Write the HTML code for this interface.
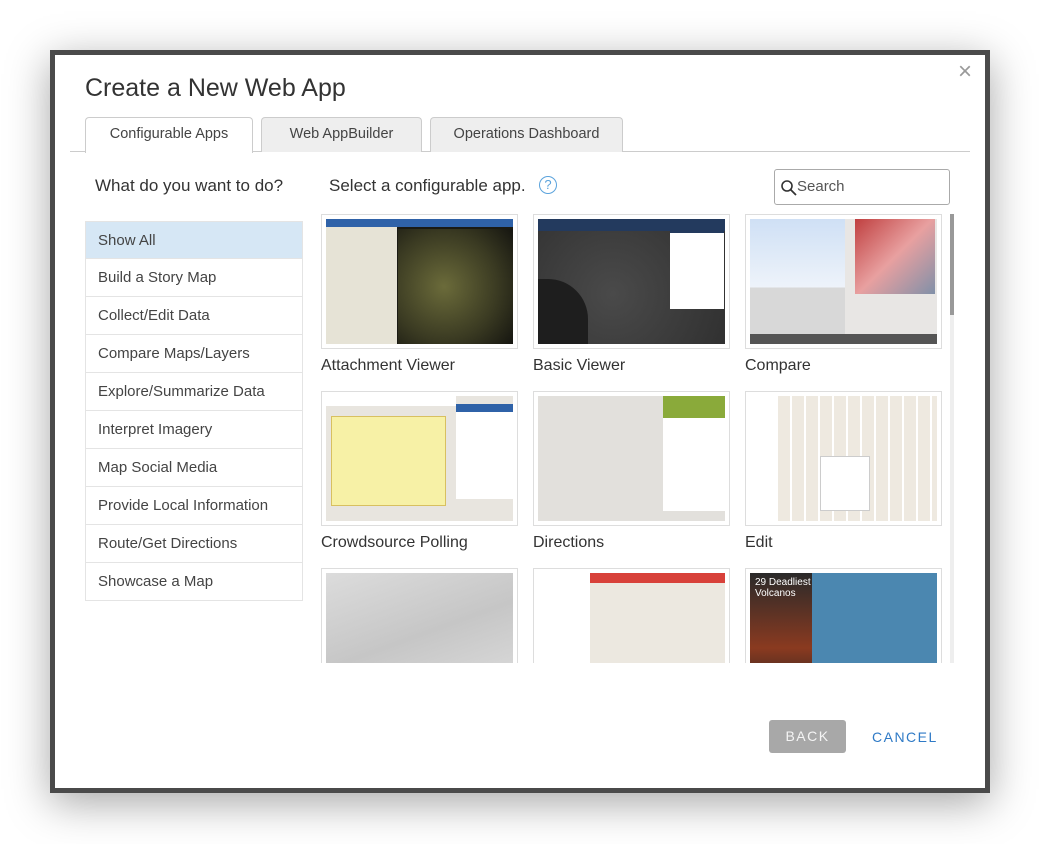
<!DOCTYPE html>
<html><head><meta charset="utf-8"><style>
*{box-sizing:border-box;margin:0;padding:0}
body{width:1040px;height:844px;background:#fff;position:relative;overflow:hidden;font-family:"Liberation Sans",sans-serif;color:#333}
.frame{position:absolute;left:50px;top:50px;width:940px;height:743px;background:#4a4a4a;box-shadow:0 10px 40px rgba(0,0,0,.35)}
.dlg{position:absolute;left:55px;top:55px;width:930px;height:733px;background:#fff}
.abs{position:absolute}
h1{position:absolute;left:30px;top:19px;font-size:25px;font-weight:normal;color:#333}
.close{position:absolute;left:903px;top:3px;font-size:24px;color:#999}
.tab{position:absolute;top:62px;height:35px;border:1px solid #ccc;border-bottom:none;background:#eee;border-radius:4px 4px 0 0;font-size:14.5px;text-align:center;line-height:33px;color:#444}
.tabline{position:absolute;left:15px;top:96px;width:900px;border-top:1px solid #ccc}
.list{position:absolute;left:30px;top:166px;width:218px}
.list div{height:38px;border:1px solid #e4e4e4;border-top:none;padding-left:12px;line-height:37px;font-size:15px;color:#444}
.list div:first-child{background:#d6e7f5;border-top:1px solid #e4e4e4}
.card{position:absolute;width:197px;border:1px solid #ddd;padding:4px;background:#fff}
.card .img{width:100%;height:100%}
.lbl{position:absolute;font-size:16px;color:#333}
</style></head><body>
<div class="frame"></div>
<div class="dlg">
<h1>Create a New Web App</h1>
<div class="close">×</div>
<div class="tabline"></div>
<div class="tab" style="left:30px;width:168px;background:#fff;height:36px">Configurable Apps</div>
<div class="tab" style="left:206px;width:161px">Web AppBuilder</div>
<div class="tab" style="left:375px;width:193px">Operations Dashboard</div>
<div class="abs" style="left:40px;top:121px;font-size:17px;color:#333">What do you want to do?</div>
<div class="abs" style="left:274px;top:121px;font-size:17px;color:#333">Select a configurable app.</div>
<div class="abs" style="left:484px;top:121px;width:18px;height:18px;border:1.5px solid #5ba3dc;border-radius:50%;color:#5ba3dc;font-size:13px;text-align:center;line-height:15px">?</div>
<div class="abs" style="left:719px;top:114px;width:176px;height:36px;border:1px solid #aaa;border-radius:3px">
<svg class="abs" style="left:5px;top:9px" width="18" height="18" viewBox="0 0 18 18"><circle cx="7" cy="7" r="5" fill="none" stroke="#333" stroke-width="1.6"/><path d="M10.5 10.5L16 16" stroke="#333" stroke-width="1.8"/></svg>
<span class="abs" style="left:22px;top:8px;font-size:15px;color:#555">Search</span></div>
<div class="list"><div>Show All</div><div>Build a Story Map</div><div>Collect/Edit Data</div><div>Compare Maps/Layers</div><div>Explore/Summarize Data</div><div>Interpret Imagery</div><div>Map Social Media</div><div>Provide Local Information</div><div>Route/Get Directions</div><div>Showcase a Map</div></div>

<div class="card" style="left:266px;top:159px;height:135px"><div class="img" style="background:linear-gradient(90deg,#e6e3d6 0 38%,#1a1a14 38%);position:relative"><div class="abs" style="left:0;top:0;width:100%;height:8px;background:#2f62a8"></div><div class="abs" style="left:72px;top:10px;right:0;bottom:0;background:radial-gradient(circle at 40% 50%,#6b6b3a,#3a3a22 60%,#151510)"></div></div></div>
<div class="card" style="left:478px;top:159px;height:135px"><div class="img" style="background:radial-gradient(circle at 40% 60%,#4a4a4a,#2e2e2e);position:relative"><div class="abs" style="left:0;top:0;width:100%;height:12px;background:#233a5e"></div><div class="abs" style="left:0;top:60px;width:50px;height:65px;background:#1e1e1e;border-radius:0 40px 0 0"></div><div class="abs" style="left:132px;top:0;width:54px;height:90px;background:#fff;border-top:14px solid #233a5e"></div></div></div>
<div class="card" style="left:690px;top:159px;height:135px"><div class="img" style="background:linear-gradient(180deg,#cfe0f5 0,#eef3fa 55%,#d8d8d8 55%);position:relative"><div class="abs" style="left:95px;top:0;right:0;bottom:10px;background:#e8e6e4"></div><div class="abs" style="left:105px;top:0;width:80px;height:75px;background:linear-gradient(135deg,#c04040,#e8a0a0 50%,#8090a8)"></div><div class="abs" style="left:0;bottom:0;width:100%;height:10px;background:#555"></div></div></div>
<div class="lbl" style="left:266px;top:302px">Attachment Viewer</div>
<div class="lbl" style="left:478px;top:302px">Basic Viewer</div>
<div class="lbl" style="left:690px;top:302px">Compare</div>

<div class="card" style="left:266px;top:336px;height:135px"><div class="img" style="background:#e8e5df;position:relative"><div class="abs" style="left:5px;top:20px;width:115px;height:90px;background:#f7f1a6;border:1px solid #d8c060"></div><div class="abs" style="left:130px;top:8px;right:0;height:95px;background:#fff;border-top:8px solid #2f62a8"></div><div class="abs" style="left:0;top:0;width:130px;height:10px;background:#fff"></div></div></div>
<div class="card" style="left:478px;top:336px;height:135px"><div class="img" style="background:#e2e0dc;position:relative"><div class="abs" style="left:125px;top:0;right:0;bottom:10px;background:#fff;border-top:22px solid #8aaa3a"></div></div></div>
<div class="card" style="left:690px;top:336px;height:135px"><div class="img" style="background:repeating-linear-gradient(90deg,#eee9e0 0 12px,#fff 12px 14px);position:relative"><div class="abs" style="left:0;top:0;width:26px;height:100%;background:#fff"></div><div class="abs" style="left:70px;top:60px;width:50px;height:55px;background:#fff;border:1px solid #ccc"></div></div></div>
<div class="lbl" style="left:266px;top:479px">Crowdsource Polling</div>
<div class="lbl" style="left:478px;top:479px">Directions</div>
<div class="lbl" style="left:690px;top:479px">Edit</div>

<div style="position:absolute;left:260px;top:510px;width:640px;height:98px;overflow:hidden">
<div class="card" style="left:6px;top:3px;height:135px"><div class="img" style="background:linear-gradient(160deg,#dcdcdc,#c6c6c6 50%,#dedede)"></div></div>
<div class="card" style="left:218px;top:3px;height:135px"><div class="img" style="background:#ece8e0;position:relative"><div class="abs" style="left:0;top:0;width:52px;height:100%;background:#fff"></div><div class="abs" style="left:52px;top:0;right:0;height:10px;background:#d8413a"></div></div></div>
<div class="card" style="left:430px;top:3px;height:135px"><div class="img" style="background:#4b87b0;position:relative"><div class="abs" style="left:0;top:0;width:62px;height:100%;background:linear-gradient(180deg,#2a2a2a,#8a3a20 60%,#222)"></div><div class="abs" style="left:5px;top:4px;color:#fff;font-size:10px">29 Deadliest<br>Volcanos</div></div></div>
</div>
<div class="abs" style="left:895px;top:159px;width:4px;height:449px;background:#eee"></div>
<div class="abs" style="left:895px;top:159px;width:4px;height:101px;background:#999"></div>

<div class="abs" style="left:714px;top:665px;width:77px;height:33px;background:#a8a8a8;border-radius:3px;color:#f4f4f4;font-size:14px;letter-spacing:1.5px;text-align:center;line-height:33px">BACK</div>
<div class="abs" style="left:817px;top:674px;color:#2f7ac6;font-size:14px;letter-spacing:1.5px">CANCEL</div>
</div>
</body></html>
